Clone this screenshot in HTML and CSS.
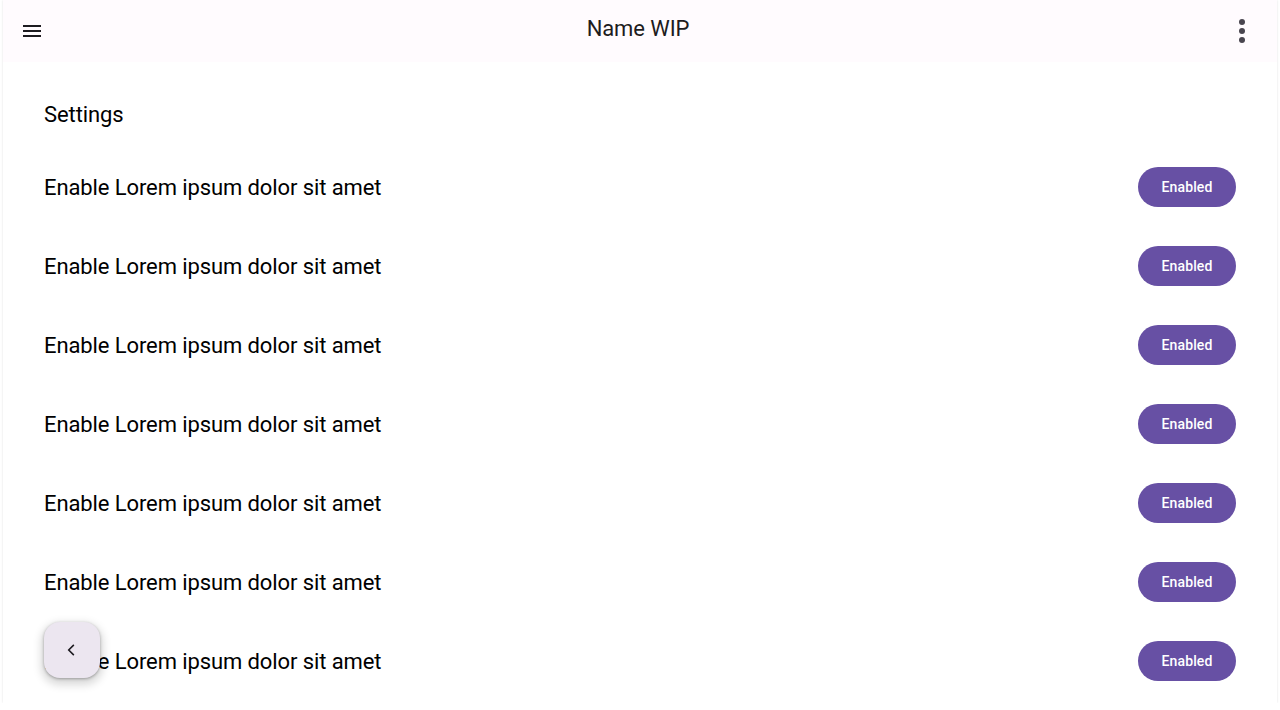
FILE: index.html
```html
<!DOCTYPE html>
<html lang="en">
<head>
<meta charset="utf-8">
<title>Name WIP</title>
<link rel="stylesheet" href="styles.css">
</head>
<body>
<div class="frame">
  <header class="topbar">
    <button class="icon-btn menu" aria-label="Menu">
      <svg width="24" height="24" viewBox="0 0 24 24"><path d="M3 18h18v-2H3v2zm0-5h18v-2H3v2zm0-7v2h18V6H3z" fill="#1d1b20"/></svg>
    </button>
    <h1 class="title">Name WIP</h1>
    <button class="icon-btn dots" aria-label="More">
      <svg width="12" height="30" viewBox="0 0 12 30"><circle cx="6" cy="6" r="3" fill="#49454f"/><circle cx="6" cy="15" r="3" fill="#49454f"/><circle cx="6" cy="24" r="3" fill="#49454f"/></svg>
    </button>
  </header>
  <main class="content">
    <h2 class="section">Settings</h2>
    <div class="row"><span class="label">Enable Lorem ipsum dolor sit amet</span><button class="pill">Enabled</button></div>
    <div class="row"><span class="label">Enable Lorem ipsum dolor sit amet</span><button class="pill">Enabled</button></div>
    <div class="row"><span class="label">Enable Lorem ipsum dolor sit amet</span><button class="pill">Enabled</button></div>
    <div class="row"><span class="label">Enable Lorem ipsum dolor sit amet</span><button class="pill">Enabled</button></div>
    <div class="row"><span class="label">Enable Lorem ipsum dolor sit amet</span><button class="pill">Enabled</button></div>
    <div class="row"><span class="label">Enable Lorem ipsum dolor sit amet</span><button class="pill">Enabled</button></div>
    <div class="row"><span class="label">Enable Lorem ipsum dolor sit amet</span><button class="pill">Enabled</button></div>
  </main>
  <button class="fab" aria-label="Back">
    <svg width="24" height="24" viewBox="0 0 24 24"><path d="M14.4 7.4 13.3 6.3 7.6 12l5.7 5.7 1.1-1.1L9.8 12z" fill="#1d1b20"/></svg>
  </button>
</div>
</body>
</html>
```
FILE: styles.css
```css
* { box-sizing: border-box; }
html, body { margin: 0; padding: 0; background: #ffffff; }
body {
  font-family: Roboto, "Noto Sans", Arial, sans-serif;
  color: #1c1b1f;
}
.frame {
  position: relative;
  margin: 0 3px;
  height: 703px;
  overflow: hidden;
  background: #ffffff;
  box-shadow: 0 0 2px rgba(0,0,0,0.12);
  display: flex;
  flex-direction: column;
}
.topbar {
  height: 62px;
  flex: 0 0 62px;
  background: #fffbfe;
  display: grid;
  grid-template-columns: 1fr auto 1fr;
  align-items: center;
  padding: 0 29px 0 17px;
}
.icon-btn {
  width: 24px;
  height: 24px;
  padding: 0;
  border: 0;
  background: transparent;
  display: flex;
  align-items: center;
  justify-content: center;
}
.icon-btn.menu { justify-self: start; }
.icon-btn.dots {
  justify-self: end;
  width: 12px;
  height: 30px;
}
.title {
  margin: 0 0 4px;
  transform: translateX(4px);
  font-size: 22px;
  font-weight: 400;
  letter-spacing: -0.1px;
  color: #1d1b20;
  line-height: 28px;
}
.content {
  padding: 39px 41px 0;
  display: flex;
  flex-direction: column;
}
.section {
  margin: 0 0 18px;
  font-size: 22px;
  font-weight: 400;
  letter-spacing: -0.1px;
  line-height: 28px;
  color: #000000;
}
.row {
  height: 79px;
  flex: 0 0 79px;
  display: flex;
  align-items: center;
  justify-content: space-between;
}
.label {
  font-size: 22px;
  letter-spacing: -0.1px;
  line-height: 28px;
  padding-top: 2px;
  color: #000000;
}
.pill {
  width: 98px;
  height: 40px;
  border: 0;
  border-radius: 20px;
  background: #6750a4;
  color: #ffffff;
  font-family: Roboto, "Noto Sans", Arial, sans-serif;
  font-size: 14px;
  font-weight: 500;
  letter-spacing: 0.1px;
  padding: 0;
}
.fab {
  position: absolute;
  left: 41px;
  bottom: 25px;
  width: 56px;
  height: 56px;
  border: 0;
  border-radius: 16px;
  background: #ece6f0;
  box-shadow: 0 1px 3px rgba(0,0,0,0.3), 0 4px 8px 3px rgba(0,0,0,0.15);
  display: flex;
  align-items: center;
  justify-content: center;
  padding: 0;
}
```
